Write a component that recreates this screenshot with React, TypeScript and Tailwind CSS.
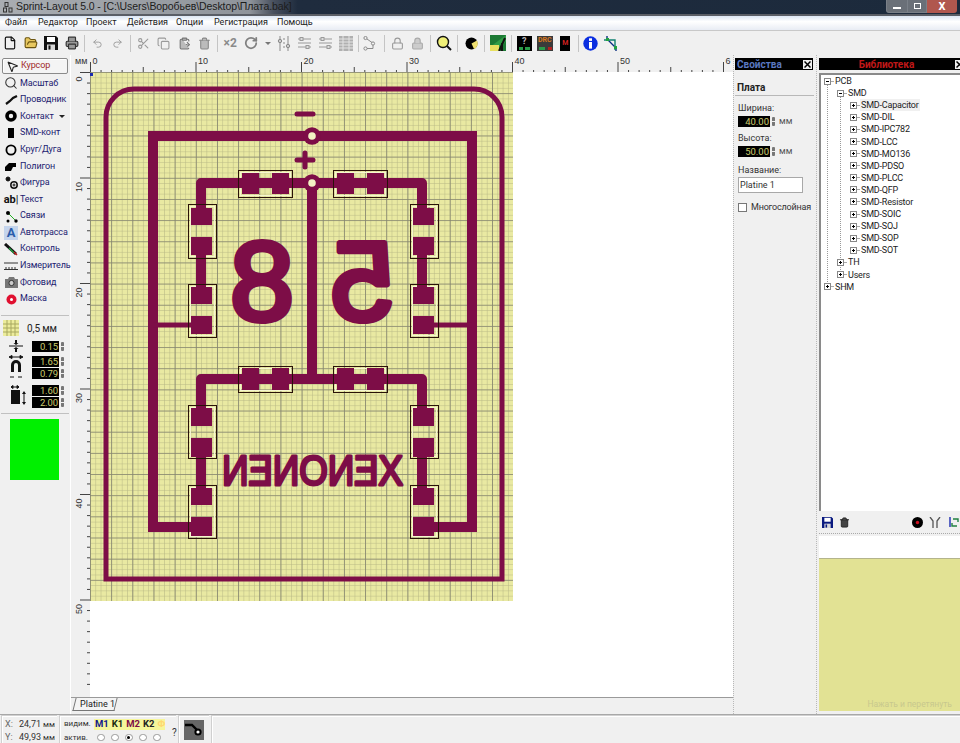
import type { ReactNode } from "react";
import {
  ClipboardPaste,
  Copy,
  File,
  FolderOpen,
  MousePointer2,
  Printer,
  Redo2,
  RotateCw,
  Scissors,
  Search,
  Trash2,
  Undo2,
  Lock,
} from "lucide-react";

const FONT = "font-['Roboto','Liberation_Sans',Arial,sans-serif]";
const PCB = "#7d0d47";

const menu = [
  ["Файл", "w-[33px]"],
  ["Редактор", "w-[48px]"],
  ["Проект", "w-[41px]"],
  ["Действия", "w-[49px]"],
  ["Опции", "w-[38px]"],
  ["Регистрация", "w-[63px]"],
  ["Помощь", "w-[50px]"],
];

const tree = [
  "SMD-Capacitor",
  "SMD-DIL",
  "SMD-IPC782",
  "SMD-LCC",
  "SMD-MO136",
  "SMD-PDSO",
  "SMD-PLCC",
  "SMD-QFP",
  "SMD-Resistor",
  "SMD-SOIC",
  "SMD-SOJ",
  "SMD-SOP",
  "SMD-SOT",
];

function Sep() {
  return <div className="mx-[2px] h-[17px] w-px shrink-0 bg-[#c4c4c4]" />;
}

function Tool({ children, w = "w-[20.5px]" }: { children: ReactNode; w?: string }) {
  return <div className={`flex h-[20px] shrink-0 items-center justify-center ${w}`}>{children}</div>;
}

function FloppyIcon({ size = 14, color = "#111" }: { size?: number; color?: string }) {
  return (
    <svg width={size} height={size} viewBox="0 0 14 14">
      <path d="M0 0h12l2 2v12H0z" fill={color} />
      <rect x="3" y="1" width="8" height="5" fill="#fff" />
      <rect x="3" y="8.5" width="8" height="5.5" fill="#d8d8d8" />
      <rect x="4.5" y="9.5" width="2" height="4" fill={color} />
    </svg>
  );
}

function Toolbar() {
  const off = "#9a9a9a";
  return (
    <div className="flex h-[24px] items-center bg-[#f0f0f0]">
      <Tool><File size={14} color="#111" /></Tool>
      <Tool><FolderOpen size={14} color="#6b5410" fill="#e8c860" /></Tool>
      <Tool><FloppyIcon /></Tool>
      <Tool><Printer size={14} color="#333" fill="#999" /></Tool>
      <Sep />
      <Tool><Undo2 size={11} color={off} /></Tool>
      <Tool><Redo2 size={11} color={off} /></Tool>
      <Sep />
      <Tool><Scissors size={13} color={off} /></Tool>
      <Tool><Copy size={13} color={off} /></Tool>
      <Tool><ClipboardPaste size={13} color="#777" fill="#bbb" /></Tool>
      <Tool><Trash2 size={13} color="#888" fill="#bbb" /></Tool>
      <Sep />
      <Tool><span className="text-[12px] font-bold text-[#8a8a8a]">×2</span></Tool>
      <Tool><RotateCw size={14} color="#808080" strokeWidth={3} /></Tool>
      <div className="ml-[4px] mr-[3px] h-0 w-0 border-x-[3px] border-t-[3px] border-x-transparent border-t-[#777]" />
      <Tool><LinesIcon /></Tool>
      <Tool><SwitchIcon /></Tool>
      <Tool><SwitchIcon /></Tool>
      <Tool><ChipIcon /></Tool>
      <Sep />
      <Tool w="w-[16px]"><NodesIcon /></Tool>
      <div className="w-[5px]" />
      <Sep />
      <Tool><Lock size={13} color="#999" /></Tool>
      <Tool><Lock size={13} color="#aaa" fill="#ccc" /></Tool>
      <Sep />
      <Tool w="w-[22px]">
        <svg width="16" height="16" viewBox="0 0 16 16">
          <circle cx="7" cy="7" r="5.5" fill="#f0f078" stroke="#111" strokeWidth="1.4" />
          <path d="M11 11l4 4" stroke="#111" strokeWidth="2" />
        </svg>
      </Tool>
      <Sep />
      <Tool w="w-[22px]">
        <svg width="13" height="13" viewBox="0 0 13 13">
          <circle cx="6.5" cy="6.5" r="6" fill="#000" />
          <path d="M6.5 6.5L12 3.5A6 6 0 0 1 9 12z" fill="#f0e070" />
        </svg>
      </Tool>
      <Sep />
      <Tool w="w-[22px]">
        <svg width="16" height="16" viewBox="0 0 16 16">
          <rect width="16" height="16" fill="#1d7a35" />
          <path d="M0 12l16-12v6L8 16H0z" fill="#2f9c46" />
          <path d="M0 10h9v6H0z" fill="#e8e060" />
          <path d="M9 16L15 3M12 16V8" stroke="#111" strokeWidth="2" />
        </svg>
      </Tool>
      <Sep />
      <Tool>
        <div className="relative flex h-[15px] w-[15px] justify-center bg-black text-[9px] font-bold leading-[10px] text-[#b8b8b8]">
          ?
          <div className="absolute bottom-[1px] left-[2px] h-[3px] w-[4px] bg-[#2a9c4a]" />
          <div className="absolute bottom-[1px] right-[2px] h-[3px] w-[5px] bg-[#2a9c4a]" />
        </div>
      </Tool>
      <Tool>
        <div className="relative flex h-[15px] w-[16px] justify-center bg-[#3a3a3a] text-[7px] font-bold leading-[9px] text-[#d87820]">
          DRC
          <div className="absolute bottom-[1px] right-[1px] h-[3px] w-[4px] bg-[#b02020]" />
          <div className="absolute bottom-[1px] left-[2px] h-[3px] w-[6px] bg-[#2a9c4a]" />
        </div>
      </Tool>
      <Tool>
        <div className="flex h-[15px] w-[10px] items-center justify-center bg-black text-[7px] font-bold text-[#d02020]">M</div>
      </Tool>
      <Sep />
      <Tool>
        <svg width="15" height="15" viewBox="0 0 15 15">
          <circle cx="7.5" cy="7.5" r="7.2" fill="#0a2ee0" />
          <rect x="6" y="2.3" width="3" height="2.6" fill="#fff" />
          <rect x="6" y="6" width="3" height="6.6" fill="#fff" />
        </svg>
      </Tool>
      <Tool>
        <svg width="15" height="15" viewBox="0 0 15 15" fill="none">
          <path d="M3 0v3l9 9v3" stroke="#0a2e80" strokeWidth="1.4" />
          <path d="M0 4h11v10" stroke="#108070" strokeWidth="1.4" />
          <rect x="2" y="2" width="3" height="3" fill="#20a040" />
          <rect x="10" y="10" width="3" height="3" fill="#20a040" />
        </svg>
      </Tool>
    </div>
  );
}

function LinesIcon() {
  return (
    <svg width="15" height="15" viewBox="0 0 15 15" fill="none" stroke="#8a8a8a">
      <path d="M3 0v15M11 0v15" />
      <circle cx="3" cy="5" r="1.7" fill="#ccc" />
      <circle cx="11" cy="10" r="1.7" fill="#ccc" />
      <path d="M6 3h2M6 7h2M6 11h2" />
    </svg>
  );
}

function SwitchIcon() {
  return (
    <svg width="15" height="14" viewBox="0 0 15 14" fill="none" stroke="#9a9a9a">
      <path d="M1 3h13M1 7h13M1 11h13" />
      <rect x="3" y="1.5" width="3" height="3" fill="#ddd" />
      <rect x="9" y="9.5" width="3" height="3" fill="#ddd" />
    </svg>
  );
}

function ChipIcon() {
  return (
    <svg width="14" height="15" viewBox="0 0 14 15">
      <rect width="14" height="15" fill="#b0b0b0" />
      <path d="M0 3h14M0 6h14M0 9h14M0 12h14M4 0v15M10 0v15" stroke="#e4e4e4" />
    </svg>
  );
}

function NodesIcon() {
  return (
    <svg width="13" height="15" viewBox="0 0 13 15" fill="none" stroke="#8a8a8a">
      <circle cx="2.5" cy="2" r="1.6" />
      <circle cx="2.5" cy="12.5" r="1.6" />
      <circle cx="10" cy="7.5" r="1.6" />
      <path d="M4 3l5 3.5M4 12.5h6V9" />
    </svg>
  );
}

function ToolIcon({ kind }: { kind: string }) {
  const box = "flex h-[14px] w-[14px] items-center justify-center";
  const icon: Record<string, ReactNode> = {
    cursor: <MousePointer2 size={13} color="#222" />,
    zoom: <Search size={14} color="#333" strokeWidth={1.8} />,
    wire: (
      <svg width="13" height="10" viewBox="0 0 13 10">
        <path d="M1 9l4-3 3-3 4-2" stroke="#111" strokeWidth="2.2" fill="none" />
      </svg>
    ),
    pad: (
      <svg width="12" height="12" viewBox="0 0 12 12">
        <circle cx="6" cy="6" r="4" fill="none" stroke="#000" strokeWidth="3.6" />
      </svg>
    ),
    smd: <div className="h-[10px] w-[6px] bg-black" />,
    circle: (
      <svg width="12" height="12" viewBox="0 0 12 12">
        <circle cx="6" cy="6" r="4.6" fill="none" stroke="#000" strokeWidth="1.8" />
      </svg>
    ),
    poly: (
      <svg width="12" height="9" viewBox="0 0 12 9">
        <path d="M0 9V5l4-4h7v4h-3l-2 4z" fill="#000" />
      </svg>
    ),
    shape: (
      <svg width="13" height="13" viewBox="0 0 13 13" fill="none" stroke="#111">
        <circle cx="3" cy="3" r="2" fill="#111" />
        <circle cx="9" cy="9" r="3.2" strokeWidth="1.5" />
        <circle cx="9" cy="9" r="1" />
      </svg>
    ),
    text: (
      <span className="whitespace-nowrap text-[11px] font-bold leading-none tracking-normal text-[#111]">
        ab<span className="font-normal">|</span>
      </span>
    ),
    links: (
      <svg width="13" height="13" viewBox="0 0 13 13">
        <path d="M3 3l8 8" stroke="#20b020" />
        <circle cx="3" cy="3" r="2" fill="#000" />
        <circle cx="3" cy="11" r="1.5" fill="#000" />
        <circle cx="11" cy="11" r="1.7" fill="#000" />
      </svg>
    ),
    auto: (
      <div className="flex h-[14px] w-[14px] items-center justify-center bg-[#c4d4ec] text-[13px] font-bold leading-none text-[#2a5caa]">
        A
      </div>
    ),
    check: (
      <svg width="14" height="13" viewBox="0 0 14 13">
        <path d="M1 1l11 10" stroke="#111" strokeWidth="3" />
        <path d="M5 5l5 5" stroke="#20a040" strokeWidth="1.5" />
        <path d="M10 9l3 3" stroke="#c02020" strokeWidth="1.5" />
      </svg>
    ),
    measure: (
      <svg width="14" height="8" viewBox="0 0 14 8" fill="none" stroke="#333">
        <path d="M0 1h14M0 7.5h14M2 5v2M5 5v2M8 5v2M11 5v2" />
      </svg>
    ),
    photo: (
      <svg width="13" height="11" viewBox="0 0 13 11">
        <path d="M0 2h3l1-2h5l1 2h3v9H0z" fill="#777" />
        <circle cx="6.5" cy="6" r="2.6" fill="#ccc" stroke="#333" />
      </svg>
    ),
    mask: (
      <svg width="11" height="11" viewBox="0 0 11 11">
        <circle cx="5.5" cy="5.5" r="5" fill="#e01030" />
        <circle cx="5.5" cy="5.5" r="1.5" fill="#fff" />
      </svg>
    ),
  };
  return <div className={box}>{icon[kind]}</div>;
}

const tools = [
  ["zoom", "Масштаб"],
  ["wire", "Проводник"],
  ["pad", "Контакт"],
  ["smd", "SMD-конт"],
  ["circle", "Круг/Дуга"],
  ["poly", "Полигон"],
  ["shape", "Фигура"],
  ["text", "Текст"],
  ["links", "Связи"],
  ["auto", "Автотрасса"],
  ["check", "Контроль"],
  ["measure", "Измеритель"],
  ["photo", "Фотовид"],
  ["mask", "Маска"],
];

function Spinner() {
  return (
    <div className="flex h-[9px] w-[3px] flex-col justify-between">
      <div className="h-[4px] rounded-t-[1px] bg-[#777]" />
      <div className="h-[4px] rounded-b-[1px] bg-[#777]" />
    </div>
  );
}

function Field({ value, w = "w-[27px]" }: { value: string; w?: string }) {
  return (
    <div className="flex items-center gap-[2px]">
      <div className={`h-[11px] bg-black pr-[1px] text-right text-[9.5px] leading-[11px] text-[#cccc6c] ${w}`}>{value}</div>
      <Spinner />
    </div>
  );
}

function LeftPanel() {
  return (
    <div className="flex w-[71px] shrink-0 flex-col border-r border-white bg-[#f0f0f0] pt-[3px] text-[9px] tracking-[-0.1px]">
      <div className="ml-[2px] flex h-[16px] w-[66px] items-center rounded-[2px] border border-[#8a8a8a] bg-[#f4f4f4] pl-[2px] text-[#a02828] shadow-[inset_1px_1px_0_#fff]">
        <ToolIcon kind="cursor" />
        <span className="ml-[2px]">Курсор</span>
      </div>
      <div className="flex flex-col pt-[1px]">
        {tools.map(([kind, label], i) => (
          <div key={label} className={`flex h-[16.6px] items-center pl-[4px] text-[#1c1c70] ${i === 2 ? "relative" : ""}`}>
            <ToolIcon kind={kind} />
            <span className="ml-[2px] whitespace-nowrap">{label}</span>
            {i === 2 && (
              <div className="absolute left-[59px] top-[7px] h-0 w-0 border-x-[3px] border-t-[3px] border-x-transparent border-t-[#222]" />
            )}
          </div>
        ))}
      </div>
      <div className="mx-[1px] mt-[8px] h-[2px] border-t border-[#c0c0c0]" />
      <div className="flex h-[22px] items-center pl-[3px] text-[#222]">
        <svg width="16" height="16" viewBox="0 0 16 16">
          <rect width="16" height="16" fill="#ecec9c" />
          <path d="M4 0v16M8 0v16M12 0v16M0 4h16M0 8h16M0 12h16" stroke="#a8a860" />
        </svg>
        <span className="ml-[8px] text-[10px]">0,5 мм</span>
      </div>
      <div className="flex h-[14px] items-center pl-[8px]">
        <svg width="16" height="12" viewBox="0 0 16 12" className="mr-[8px]">
          <path d="M1 6h14" stroke="#111" />
          <path d="M8 0v3M8 9v3" stroke="#111" strokeWidth="2" />
          <path d="M5.5 3h5L8 5zM5.5 9h5L8 7z" fill="#111" />
        </svg>
        <Field value="0.15" />
      </div>
      <div className="mt-[2px] flex h-[24px] items-center pl-[8px]">
        <svg width="16" height="24" viewBox="0 0 16 24" className="mr-[8px]">
          <path d="M3 2h10M1 2l3-1.5v3zM15 2l-3-1.5v3zM2 22h4M10 22h4" stroke="#111" fill="#111" />
          <path d="M3 17v-7a5 5 0 0 1 10 0v7h-3v-7a2 2 0 0 0-4 0v7z" fill="#111" />
        </svg>
        <div className="flex flex-col gap-[1px]">
          <Field value="1.65" />
          <Field value="0.79" />
        </div>
      </div>
      <div className="mt-[5px] flex h-[24px] items-center pl-[10px]">
        <svg width="16" height="22" viewBox="0 0 16 22" className="mr-[6px]">
          <path d="M1 2h8M1 2l2-1.5v3zM9 2L7 .5v3z" stroke="#111" fill="#111" />
          <rect x="1" y="5" width="9" height="14" fill="#111" />
          <path d="M14 8v10" stroke="#111" />
          <path d="M14 6l-2 3h4zM14 20l-2-3h4z" fill="#111" />
        </svg>
        <div className="flex flex-col gap-[1px]">
          <Field value="1.60" />
          <Field value="2.00" />
        </div>
      </div>
      <div className="mx-[1px] mt-[5px] h-[2px] border-t border-[#c0c0c0]" />
      <div className="ml-[10px] mt-[4px] h-[61px] w-[49px] bg-[#00f000]" />
    </div>
  );
}

function HRuler() {
  const ticks = [];
  for (let mm = 0; mm <= 60; mm++) {
    const x = 19.5 + mm * 10.55;
    const h = mm % 10 === 0 ? 10 : mm % 5 === 0 ? 5 : 2;
    ticks.push(<line key={mm} x1={x} x2={x} y1={17 - h} y2={17} stroke="#444" />);
    if (mm % 10 === 0) {
      ticks.push(
        <text key={`t${mm}`} x={x + 2} y={9} fontSize="9" fill="#333">
          {mm === 60 ? "6" : mm}
        </text>,
      );
    }
  }
  return (
    <svg width="662" height="17" className="block shrink-0" fontFamily="Liberation Sans">
      <text x="4" y="9" fontSize="9" fill="#333">мм</text>
      {ticks}
    </svg>
  );
}

function VRuler() {
  const ticks = [];
  for (let mm = 0; mm <= 58; mm++) {
    const y = mm * 10.55 + 0.5;
    const h = mm % 10 === 0 ? 10 : 3;
    ticks.push(<line key={mm} y1={y} y2={y} x1={19 - h} x2={19} stroke="#444" />);
    if (mm % 10 === 0) {
      ticks.push(
        <text key={`t${mm}`} transform={`translate(11 ${y + 4}) rotate(-90)`} textAnchor="end" fontSize="9" fill="#333">
          {mm}
        </text>,
      );
    }
  }
  return (
    <svg width="19" height="625" className="block shrink-0" fontFamily="Liberation Sans">
      {ticks}
    </svg>
  );
}

const padBoxes = [
  // horizontal pairs
  { x: 238, y: 170, w: 54, h: 27, a: [242, 173, 17, 21], b: [272, 173, 17, 21] },
  { x: 333, y: 170, w: 54, h: 27, a: [337, 173, 17, 21], b: [367, 173, 17, 21] },
  { x: 238, y: 366, w: 54, h: 26, a: [242, 368, 17, 22], b: [272, 368, 17, 22] },
  { x: 333, y: 366, w: 54, h: 26, a: [337, 368, 17, 22], b: [367, 368, 17, 22] },
  // vertical pairs
  { x: 188, y: 204, w: 28, h: 54, a: [191, 208, 21, 17], b: [191, 237, 21, 18] },
  { x: 188, y: 284, w: 28, h: 53, a: [191, 287, 21, 17], b: [191, 316, 21, 18] },
  { x: 410, y: 204, w: 28, h: 54, a: [413, 208, 21, 17], b: [413, 237, 21, 18] },
  { x: 410, y: 284, w: 28, h: 53, a: [413, 287, 21, 17], b: [413, 316, 21, 18] },
  { x: 188, y: 405, w: 28, h: 53, a: [191, 408, 21, 18], b: [191, 438, 21, 19] },
  { x: 188, y: 485, w: 28, h: 53, a: [191, 488, 21, 17], b: [191, 517, 21, 19] },
  { x: 410, y: 405, w: 28, h: 53, a: [413, 408, 21, 18], b: [413, 438, 21, 19] },
  { x: 410, y: 485, w: 28, h: 53, a: [413, 488, 21, 17], b: [413, 517, 21, 19] },
];

function Board() {
  return (
    <svg width="423" height="529" viewBox="90 72 423 529" className="block" fontFamily="Liberation Sans">
      <defs>
        <pattern id="fine" x="90" y="72" width="5.29" height="5.29" patternUnits="userSpaceOnUse">
          <path d="M0 0V5.29M0 0H5.29" stroke="#b6b684" strokeWidth="1" />
        </pattern>
        <pattern id="coarse" x="90" y="72" width="21.16" height="21.16" patternUnits="userSpaceOnUse">
          <path d="M0 0V21.16M0 0H21.16" stroke="#84846e" strokeWidth="1.6" />
        </pattern>
      </defs>
      <rect x="90" y="72" width="423" height="529" fill="#e9e9a2" />
      <rect x="90" y="72" width="423" height="529" fill="url(#fine)" />
      <rect x="90" y="72" width="423" height="529" fill="url(#coarse)" />
      <rect x="90" y="73" width="3" height="3" fill="#1a2ab0" />

      {padBoxes.map((p, i) => (
        <rect key={i} x={p.x + 2.5} y={p.y + 2.5} width={p.w - 4} height={p.h - 4} fill="none" stroke="#f6f6d0" />
      ))}

      <g fill="none" stroke={PCB} strokeLinejoin="round" strokeLinecap="round">
        <path d="M106 579V117a28 28 0 0 1 28-28H474a28 28 0 0 1 28 28V579Z" strokeWidth="5" strokeLinejoin="miter" />
        <path d="M195 527H153V136H472V527H430" strokeWidth="10" strokeLinejoin="miter" strokeLinecap="butt" />
        <path d="M201 215V183H422V215" strokeWidth="10" />
        <path d="M201 250V295M422 250V295" strokeWidth="10" />
        <path d="M201 415V379H422V415" strokeWidth="10" />
        <path d="M201 450V495M422 450V495" strokeWidth="10" />
        <path d="M312 183V379" strokeWidth="10" strokeLinecap="butt" />
        <path d="M153 325H195M430 325H472" strokeWidth="5" strokeLinecap="butt" />
        <path d="M297 114H313" strokeWidth="5" />
        <path d="M297 160H313M305 153V167" strokeWidth="5" />
      </g>

      {[136, 183].map((y) => (
        <g key={y}>
          <circle cx="312" cy={y} r="8.8" fill={PCB} />
          <circle cx="312" cy={y} r="3.8" fill="#f2f2c4" />
        </g>
      ))}

      {padBoxes.map((p, i) => (
        <g key={i}>
          <rect x={p.a[0]} y={p.a[1]} width={p.a[2]} height={p.a[3]} fill={PCB} />
          <rect x={p.b[0]} y={p.b[1]} width={p.b[2]} height={p.b[3]} fill={PCB} />
          <rect x={p.x + 0.5} y={p.y + 0.5} width={p.w} height={p.h} fill="none" stroke="#2a1208" />
        </g>
      ))}

      <g fill={PCB} stroke={PCB} strokeLinejoin="round">
        <text transform="translate(262 320) scale(-1.02 1)" textAnchor="middle" fontSize="112" strokeWidth="6">8</text>
        <text transform="translate(362 320) scale(-1.02 1)" textAnchor="middle" fontSize="112" strokeWidth="6">5</text>
        <text transform="translate(403 485) scale(-1 1)" fontSize="43" strokeWidth="3" textLength="181" lengthAdjust="spacingAndGlyphs">XENONEN</text>
      </g>
    </svg>
  );
}

function Center() {
  return (
    <div className="flex w-[662px] shrink-0 flex-col bg-[#f0f0f0]">
      <div className="h-[17px]"><HRuler /></div>
      <div className="flex h-[625px]">
        <VRuler />
        <div className="flex-1 overflow-hidden bg-white"><Board /></div>
      </div>
      <div className="h-[17px] border-t border-[#9a9a9a]">
        <div className="ml-[3px] h-[13px] w-[42px] skew-x-[-14deg] border-x border-b border-[#777] bg-[#f4f4f4]">
          <div className="skew-x-[14deg] whitespace-nowrap pl-[5px] text-[9px] leading-[12px] text-[#222]">Platine 1</div>
        </div>
      </div>
    </div>
  );
}

function CloseBtn() {
  return (
    <div className="flex h-[11px] w-[11px] shrink-0 items-center justify-center border border-black bg-[#f0f0f0]">
      <svg width="7" height="7" viewBox="0 0 7 7">
        <path d="M0.5 0.5l6 6M6.5 0.5l-6 6" stroke="#000" strokeWidth="1.5" />
      </svg>
    </div>
  );
}

function Properties() {
  return (
    <div className="flex w-[84px] shrink-0 flex-col border-x border-dotted border-[#b8b8b8] bg-[#f0f0f0] pl-[1px] pt-[3px] text-[9px] text-[#333]">
      <div className="flex h-[12px] w-[78px] items-center justify-between bg-black pl-[2px] text-[10px] font-bold text-[#5a78c0]">
        Свойства
        <CloseBtn />
      </div>
      <div className="mt-[12px] w-[79px] border-b border-[#b8b8b8] pb-[1px] pl-[2px] text-[10px] font-bold leading-[12px] text-[#222]">Плата</div>
      <div className="pl-[3px]">
        <div className="mt-[7px] leading-[11px]">Ширина:</div>
        <div className="mt-[2px] flex h-[11px] items-center gap-[4px]">
          <Field value="40.00" w="w-[32px]" />
          <span className="leading-[11px] text-[#555]">мм</span>
        </div>
        <div className="mt-[6px] leading-[11px]">Высота:</div>
        <div className="mt-[2px] flex h-[11px] items-center gap-[4px]">
          <Field value="50.00" w="w-[32px]" />
          <span className="leading-[11px] text-[#555]">мм</span>
        </div>
        <div className="mt-[8px] leading-[11px]">Название:</div>
        <div className="mt-[1px] h-[16px] w-[65px] border border-[#a8a8a8] bg-white pl-[1px] leading-[14px]">Platine 1</div>
        <div className="mt-[10px] flex h-[9px] items-center gap-[4px]">
          <div className="h-[9px] w-[9px] shrink-0 border border-[#777] bg-white" />
          <span className="whitespace-nowrap leading-[9px] tracking-[-0.2px]">Многослойная</span>
        </div>
      </div>
    </div>
  );
}

function Expander({ minus = false }: { minus?: boolean }) {
  return (
    <div className="relative h-[7px] w-[7px] shrink-0 border border-[#888] bg-white">
      <div className="absolute left-[1px] top-[2px] h-px w-[3px] bg-black" />
      {!minus && <div className="absolute left-[2px] top-[1px] h-[3px] w-px bg-black" />}
    </div>
  );
}

function TreeRow({ pl, label, minus, hi }: { pl: string; label: string; minus?: boolean; hi?: boolean }) {
  return (
    <div className={`relative flex h-[12.1px] items-center ${pl}`}>
      <Expander minus={minus} />
      <div className="h-px w-[3px] bg-[#aaa]" />
      <span className={`whitespace-nowrap px-[1px] leading-[12px] ${hi ? "bg-[#f0f0f0]" : ""}`}>{label}</span>
    </div>
  );
}

function Library() {
  return (
    <div className="flex min-w-0 flex-1 flex-col bg-[#f0f0f0] pl-[2px] pt-[3px]">
      <div className="flex h-[12px] items-center overflow-hidden bg-black">
        <div className="flex-1 text-center text-[10px] font-bold text-[#c01818]">Библиотека</div>
        <div className="-mr-[5px]"><CloseBtn /></div>
      </div>
      <div className="relative mt-[3px] h-[438px] overflow-hidden border-l-2 border-t-2 border-[#8a8a8a] bg-white text-[9px] tracking-[-0.2px] text-[#222]">
        <div className="absolute left-[6px] top-[10px] h-[201px] border-l border-dotted border-[#999]" />
        <div className="absolute left-[19px] top-[22px] h-[177px] border-l border-dotted border-[#999]" />
        <TreeRow pl="pl-[3px]" label="PCB" minus />
        <TreeRow pl="pl-[16px]" label="SMD" minus />
        {tree.map((t, i) => (
          <TreeRow key={t} pl="pl-[29px]" label={t} hi={i === 0} />
        ))}
        <TreeRow pl="pl-[16px]" label="TH" />
        <TreeRow pl="pl-[16px]" label="Users" />
        <TreeRow pl="pl-[3px]" label="SHM" />
      </div>
      <div className="flex h-[23px] items-center border-b border-dotted border-[#aaa] pl-[3px]">
        <FloppyIcon size={11} color="#0a1a80" />
        <Trash2 size={11} color="#222" fill="#444" className="ml-[6px]" />
        <svg width="11" height="11" viewBox="0 0 11 11" className="ml-[62px]">
          <circle cx="5.5" cy="5.5" r="5.5" fill="#000" />
          <circle cx="5.5" cy="5.5" r="1.7" fill="#d01020" />
        </svg>
        <svg width="12" height="11" viewBox="0 0 12 11" fill="none" stroke="#555" className="ml-[6px]">
          <path d="M1 0l3 4v7M11 0L8 4v7" strokeWidth="1.3" />
        </svg>
        <svg width="11" height="11" viewBox="0 0 11 11" fill="none" className="ml-[7px] shrink-0">
          <path d="M2 0v10" stroke="#1a2ab0" strokeWidth="1.4" />
          <path d="M5 2h5v3M9 9H4V6" stroke="#208040" strokeWidth="1.4" />
        </svg>
      </div>
      <div className="mt-[2px] h-[23px] border-b border-[#b4b48c] bg-white" />
      <div className="flex h-[152px] items-end justify-end bg-[#e2e294] pb-[2px] pr-[8px] text-[8.5px] leading-[10px] text-[#c8c88e]">
        Нажать и перетянуть
      </div>
    </div>
  );
}

function Status() {
  const group = "h-[29px] border-l border-t border-[#d0d0d0] shadow-[inset_1px_1px_0_#fff]";
  const layers = [
    ["M1", "text-[#10188c]"],
    ["K1", "text-[#1a2a10]"],
    ["M2", "text-[#7d0d47]"],
    ["K2", "text-[#222]"],
    ["Ф", "text-[#ffd870]"],
  ];
  return (
    <div className="flex h-[29px] gap-[2px] border-t border-[#a8a8a8] bg-[#f0f0f0] pl-[1px] text-[#333]">
      <div className={`w-[56px] pl-[3px] pt-[2px] text-[9px] ${group}`}>
        <div className="flex h-[13px] items-center"><span className="w-[14px] text-[#666]">X:</span>24,71 <span className="ml-[2px] text-[8px]">мм</span></div>
        <div className="flex h-[13px] items-center"><span className="w-[14px] text-[#666]">Y:</span>49,93 <span className="ml-[2px] text-[8px]">мм</span></div>
      </div>
      <div className={`relative w-[117px] pl-[4px] text-[8px] ${group}`}>
        <div className="flex h-[15px] items-center pt-[1px]">
          <span className="w-[30px]">видим.</span>
          <div className="flex h-[11px] w-[71px] items-center gap-[3px] bg-[#f6f69a] pl-[1px] text-[9.5px] font-bold leading-none">
            {layers.map(([l, c]) => (
              <span key={l} className={c}>{l}</span>
            ))}
          </div>
        </div>
        <div className="flex h-[13px] items-center">
          <span className="w-[33px]">актив.</span>
          <div className="flex gap-[6.5px]">
            {[0, 1, 2, 3, 4].map((i) => (
              <div key={i} className="flex h-[7.5px] w-[7.5px] items-center justify-center rounded-full border border-[#999] bg-white">
                {i === 2 && <div className="h-[3px] w-[3px] rounded-full bg-black" />}
              </div>
            ))}
          </div>
        </div>
        <span className="absolute left-[112px] top-[9px] text-[10px]">?</span>
      </div>
      <div className={`flex w-[31px] items-center justify-center ${group}`}>
        <div className="flex h-[20px] w-[20px] items-center justify-center bg-[#666]">
          <svg width="18" height="16" viewBox="0 0 18 16" fill="none">
            <path d="M0 3h7l5 5" stroke="#000" strokeWidth="2.4" />
            <circle cx="13" cy="10" r="2.6" stroke="#000" strokeWidth="2" fill="#fff" />
          </svg>
        </div>
      </div>
      <div className={`flex-1 ${group}`} />
    </div>
  );
}

export default function App() {
  return (
    <div className={`flex h-[743px] w-[960px] flex-col overflow-hidden bg-[#f0f0f0] ${FONT}`}>
      <div className="relative flex h-[16px] items-center border-b-2 border-[#5a5e66] bg-[linear-gradient(90deg,#a9adb2_0%,#8f949b_26%,#48505e_28.5%,#1f2c3e_31%,#1c2a3c_100%)] pl-[3px]">
        <svg width="10" height="11" viewBox="0 0 10 11" fill="none" stroke="#333">
          <rect x="2" y=".5" width="3" height="4" />
          <rect x=".5" y="6" width="3" height="4" />
          <rect x="6" y="6" width="3" height="4" />
        </svg>
        <span className="ml-[3px] whitespace-nowrap font-['Liberation_Sans',Arial,sans-serif] text-[10.5px] tracking-[-0.085px] text-[#1c1c1c]">
          Sprint-Layout 5.0 - [C:\Users\Воробьев\Desktop\Плата.bak]
        </span>
        <div className="absolute right-[3px] top-0 flex h-[13px]">
          <div className="flex w-[22px] items-end justify-center rounded-bl-[3px] border border-t-0 border-[#7a8088] bg-[#6a7078] pb-[3px]">
            <div className="h-[2px] w-[8px] bg-white" />
          </div>
          <div className="flex w-[19px] items-center justify-center border-b border-r border-[#7a8088] bg-[#6a7078]">
            <div className="h-[6px] w-[7px] border border-white" />
          </div>
          <div className="flex w-[30px] items-center justify-center rounded-br-[3px] bg-[#b0574e] text-[11px] font-bold leading-none text-white">
            X
          </div>
        </div>
      </div>
      <div className="flex h-[15px] items-center border-b border-[#c8c8c8] bg-[linear-gradient(180deg,#dce6f4,#ffffff_40%,#e8ecf4)] pl-[5px] text-[9px] text-[#222]">
        {menu.map(([m, w]) => (
          <div key={m} className={`whitespace-nowrap ${w}`}>{m}</div>
        ))}
      </div>
      <Toolbar />
      <div className="flex h-[659px]">
        <LeftPanel />
        <Center />
        <Properties />
        <Library />
      </div>
      <Status />
    </div>
  );
}
